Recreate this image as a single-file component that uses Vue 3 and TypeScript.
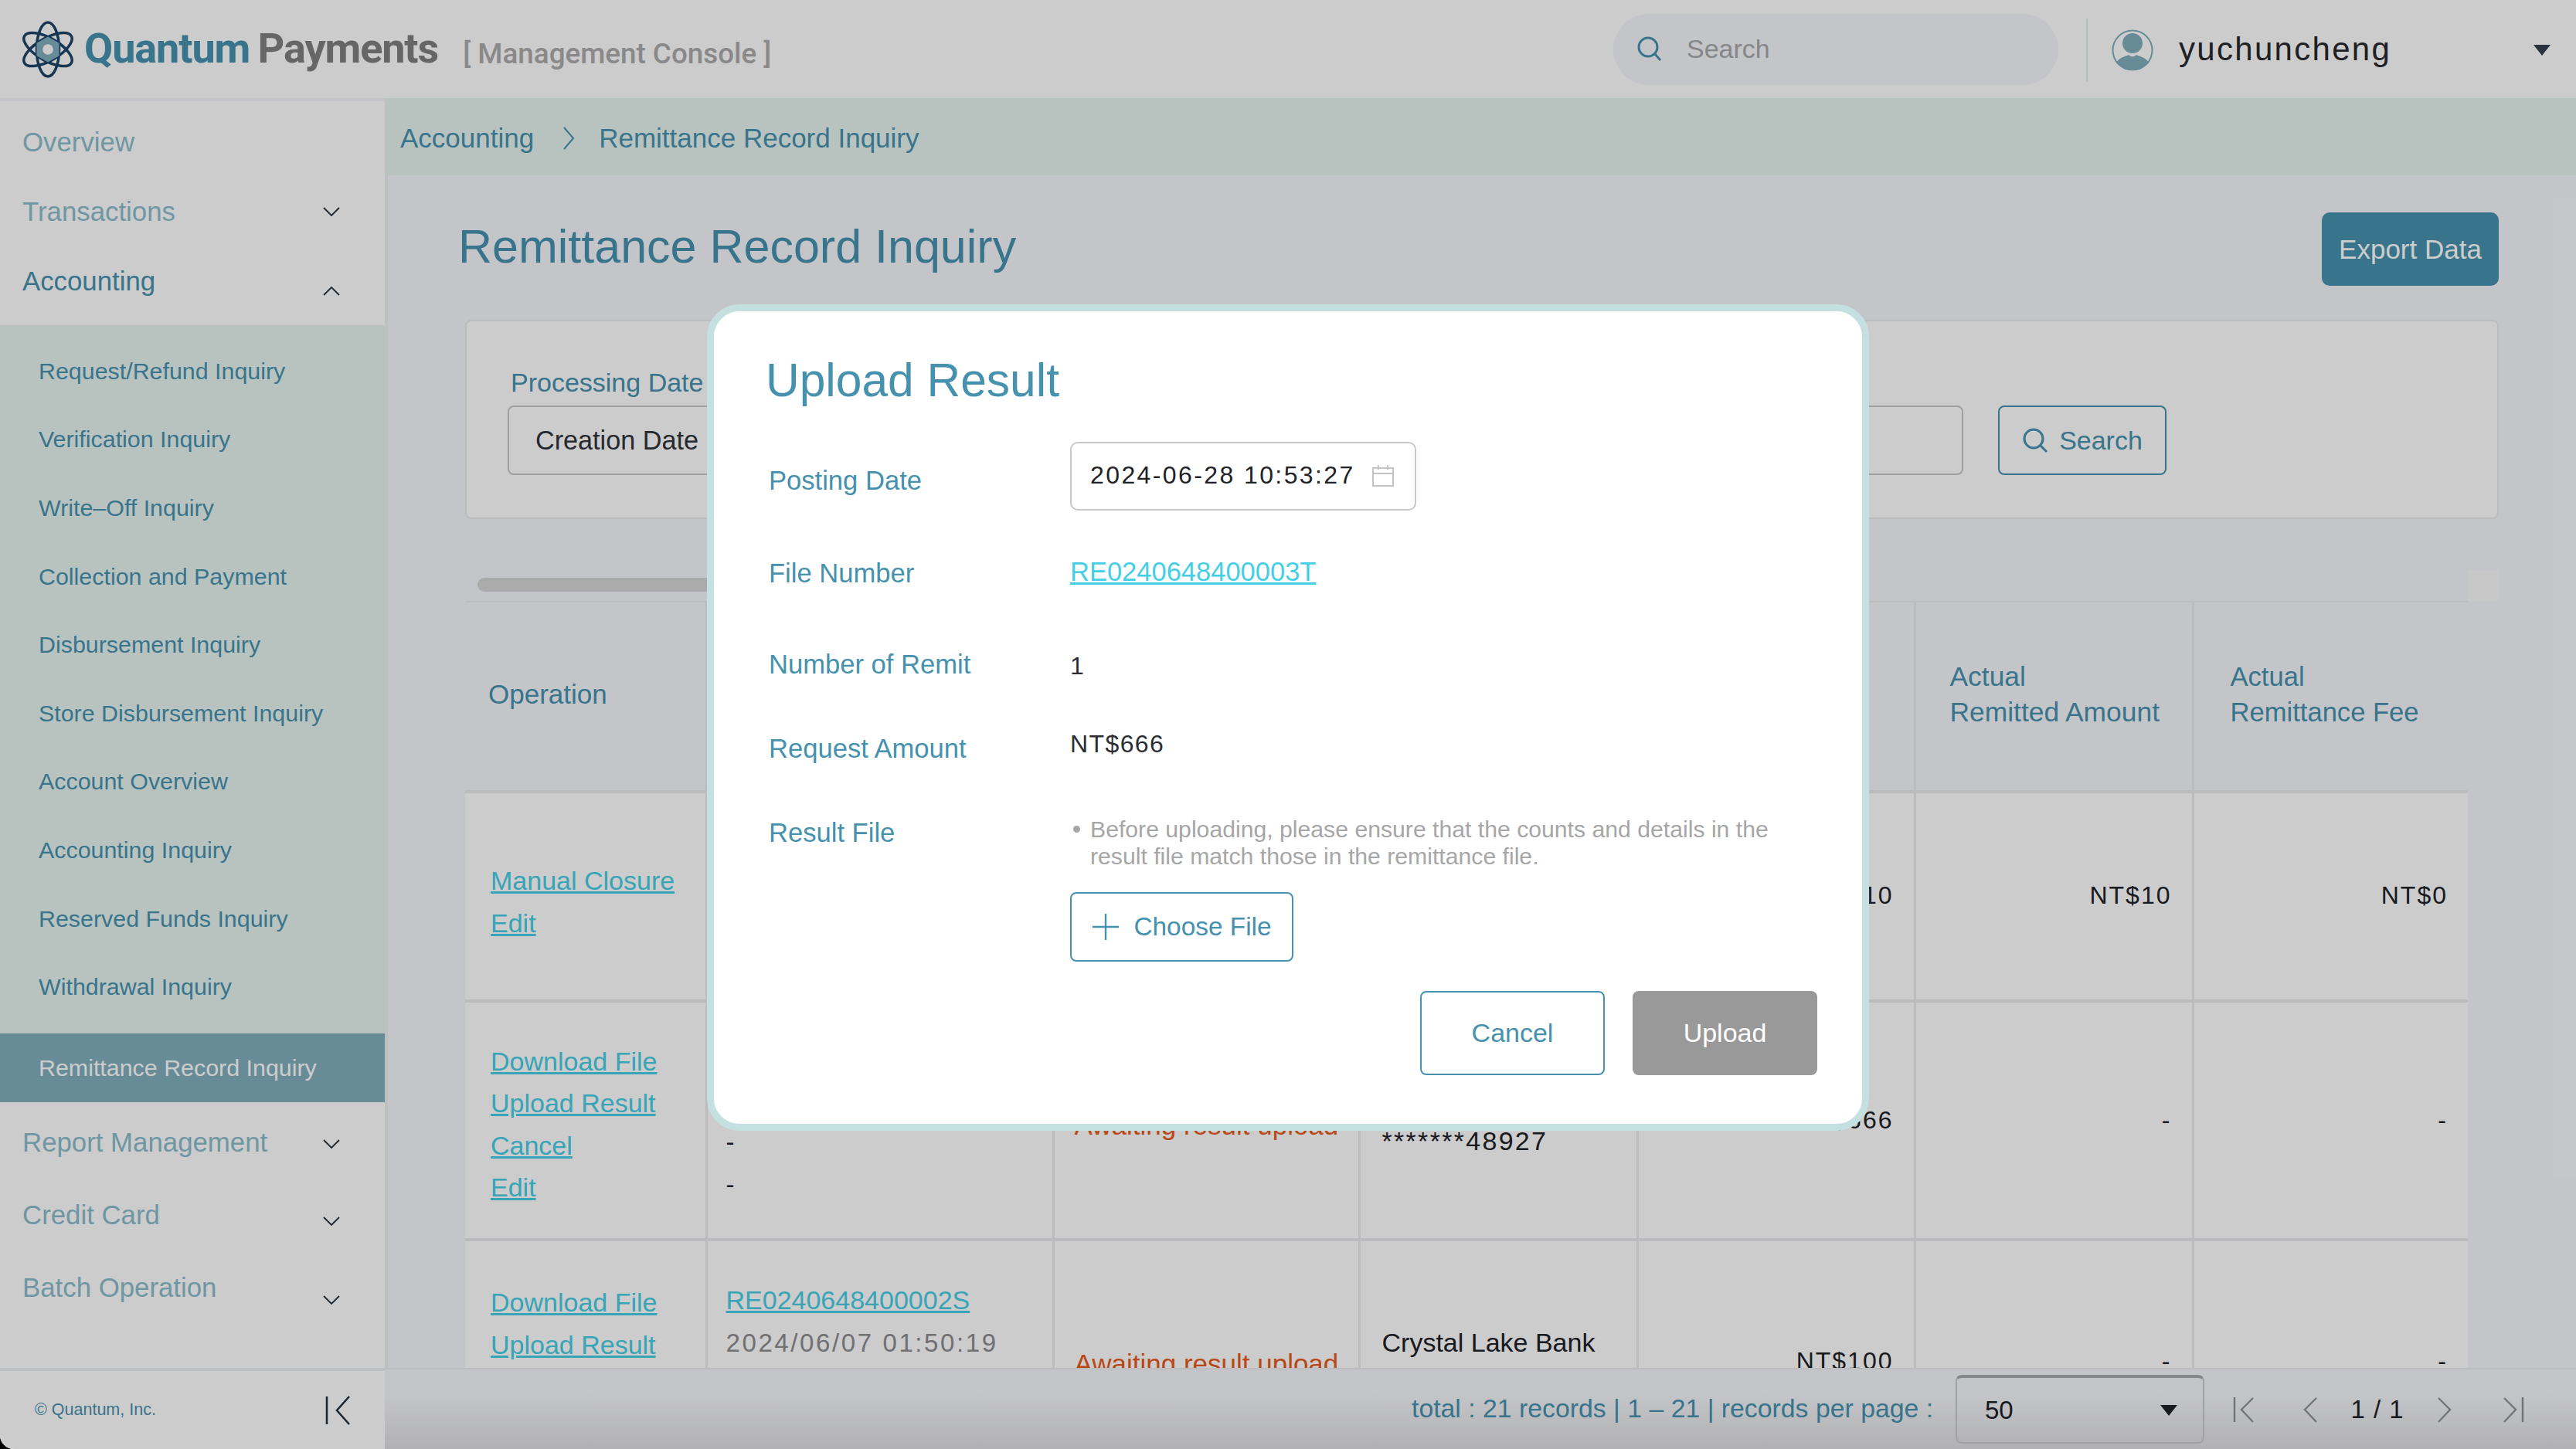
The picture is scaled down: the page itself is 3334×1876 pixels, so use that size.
<template>
  <div class="app">
    <header class="topbar">
      <div class="brand">
        <svg class="brand-logo" viewBox="0 0 72 76" fill="none">
          <g stroke="#1c4468" stroke-width="3.6">
            <ellipse cx="36" cy="38" rx="15" ry="36" />
            <ellipse cx="36" cy="38" rx="15" ry="36" transform="rotate(60 36 38)" />
            <ellipse cx="36" cy="38" rx="15" ry="36" transform="rotate(120 36 38)" />
          </g>
          <path d="M36 21 L51 29.5 V46.5 L36 55 L21 46.5 V29.5 Z" fill="#81b0bf" />
          <circle cx="36" cy="38" r="7" fill="#fff" />
        </svg>
        <span class="brand-name"><b>Quantum</b> <i>Payments</i></span>
        <span class="brand-sub">[ Management Console ]</span>
      </div>
      <div class="top-search">
        <svg class="top-search-icon" viewBox="0 0 34 34" fill="none" stroke="#4692ae" stroke-width="3">
          <circle cx="15" cy="15" r="12" />
          <path d="M24 24 L31 32" />
        </svg>
        <span>Search</span>
      </div>
      <div class="top-user">
        <svg class="avatar" viewBox="0 0 54 54">
          <circle cx="27" cy="27" r="25.5" fill="none" stroke="#81b0bf" stroke-width="2" />
          <circle cx="27" cy="18" r="13" fill="#81b0bf" />
          <path d="M6 43 C10 36 18 35 22 33 C25 36 29 36 32 33 C36 35 44 36 48 43 C43 49 35 53 27 53 C19 53 11 49 6 43 Z" fill="#81b0bf" />
        </svg>
        <span class="user-name">yuchuncheng</span>
        <span class="user-caret"></span>
      </div>
    </header>

    <div class="body">
      <aside class="sidebar">
        <nav class="nav">
          <div class="nav-top">
            <div v-for="item in topNav" :key="item.label" class="nav-row" :class="{ open: item.open }">
              <span>{{ item.label }}</span>
              <svg v-if="item.chevron" class="chev" :class="{ up: item.open }" :style="{ marginTop: item.shift + 'px' }" viewBox="0 0 24 14" fill="none" stroke="#26323c" stroke-width="1.8">
                <path d="M2 2 L12 12 L22 2" />
              </svg>
            </div>
          </div>
          <div class="sub-nav">
            <a v-for="item in subNav" :key="item" class="sub-row">{{ item }}</a>
          </div>
          <a class="sub-active">Remittance Record Inquiry</a>
          <div class="nav-bottom">
            <div v-for="item in bottomNav" :key="item.label" class="nav-row tall">
              <span>{{ item.label }}</span>
              <svg class="chev" :style="{ marginTop: item.shift + 'px' }" viewBox="0 0 24 14" fill="none" stroke="#26323c" stroke-width="1.8">
                <path d="M2 2 L12 12 L22 2" />
              </svg>
            </div>
          </div>
        </nav>
        <div class="side-foot">
          <span>© Quantum, Inc.</span>
          <svg class="collapse" viewBox="0 0 34 38" fill="none" stroke="#26323c" stroke-width="2.6">
            <path d="M2 1 V37" />
            <path d="M31 1 L15 19 L31 37" />
          </svg>
        </div>
      </aside>

      <main class="main">
        <div class="crumbs">
          <span>Accounting</span>
          <svg class="crumb-sep" viewBox="0 0 16 32" fill="none" stroke="#4692ae" stroke-width="2">
            <path d="M2 2 L14 16 L2 30" />
          </svg>
          <span>Remittance Record Inquiry</span>
        </div>

        <div class="content">
          <div class="page-head">
            <h1>Remittance Record Inquiry</h1>
            <button class="export-btn" type="button">Export Data</button>
          </div>

          <section class="filters">
            <label class="filter-label">Processing Date</label>
            <div class="filter-row">
              <div class="filter-input">
                <span class="filter-type">Creation Date</span>
              </div>
              <button class="filter-btn" type="button">
                <svg viewBox="0 0 34 34" fill="none" stroke="#4692ae" stroke-width="3">
                  <circle cx="15" cy="15" r="12" />
                  <path d="M24 24 L32 32" />
                </svg>
                Search
              </button>
            </div>
          </section>

          <div class="scroller">
            <div class="scroll-track"><div class="scroll-thumb"></div></div>
            <div class="scroll-corner"></div>
          </div>

          <div class="table-wrap">
            <table class="grid">
              <colgroup>
                <col v-for="w in colWidths" :key="w.id" :style="{ width: w.px + 'px' }" />
              </colgroup>
              <thead>
                <tr>
                  <th>Operation</th>
                  <th>File Number</th>
                  <th>Status</th>
                  <th>Bank</th>
                  <th>Request<br />Amount</th>
                  <th>Actual<br />Remitted Amount</th>
                  <th>Actual<br />Remittance Fee</th>
                </tr>
              </thead>
              <tbody>
                <tr v-for="row in rows" :key="row.file" :class="row.cls">
                  <td class="ops">
                    <a v-for="op in row.ops" :key="op">{{ op }}</a>
                  </td>
                  <td class="file">
                    <a>{{ row.file }}</a>
                    <span class="stamp">{{ row.date }}</span>
                    <span>-</span>
                    <span>-</span>
                  </td>
                  <td class="status">{{ row.status }}</td>
                  <td class="bank">
                    <span>{{ row.bank }}</span>
                    <span class="account">{{ row.account }}</span>
                  </td>
                  <td class="num">{{ row.amount }}</td>
                  <td class="num">{{ row.remitted }}</td>
                  <td class="num">{{ row.fee }}</td>
                </tr>
              </tbody>
            </table>
          </div>
        </div>

        <footer class="pager">
          <span class="pager-info">total : 21 records | 1 – 21 | records per page :</span>
          <div class="pager-select">
            <span>50</span>
            <span class="pager-caret"></span>
          </div>
          <div class="pager-nav">
            <svg class="pg first" viewBox="0 0 28 34" fill="none" stroke="#8a9098" stroke-width="2.4">
              <path d="M2 1 V33" />
              <path d="M26 2 L11 17 L26 33" stroke="#8f9398" />
            </svg>
            <svg class="pg prev" viewBox="0 0 20 34" fill="none" stroke="#8f9398" stroke-width="2.4">
              <path d="M18 2 L3 17 L18 33" />
            </svg>
            <span class="pg-text">1 / 1</span>
            <svg class="pg next" viewBox="0 0 20 34" fill="none" stroke="#8f9398" stroke-width="2.4">
              <path d="M2 2 L17 17 L2 33" />
            </svg>
            <svg class="pg last" viewBox="0 0 28 34" fill="none" stroke="#8a9098" stroke-width="2.4">
              <path d="M26 1 V33" />
              <path d="M2 2 L17 17 L2 33" stroke="#8f9398" />
            </svg>
          </div>
        </footer>
      </main>
    </div>

    <div class="mask">
      <div class="modal">
        <h2>Upload Result</h2>
        <div class="field date-field">
          <label>Posting Date</label>
          <div class="date-box">
            <span>2024-06-28 10:53:27</span>
            <svg viewBox="0 0 30 28" fill="none" stroke="#c4c4c4" stroke-width="2">
              <rect x="2" y="4" width="26" height="23" />
              <path d="M2 11 H28 M9 0 V6 M21 0 V6" />
            </svg>
          </div>
        </div>
        <div class="field file-field">
          <label>File Number</label>
          <a class="file-link">RE0240648400003T</a>
        </div>
        <div class="field count-field">
          <label>Number of Remit</label>
          <span class="value">1</span>
        </div>
        <div class="field amount-field">
          <label>Request Amount</label>
          <span class="value">NT$666</span>
        </div>
        <div class="field result-field">
          <label>Result File</label>
          <div class="result-body">
            <ul class="hint">
              <li>Before uploading, please ensure that the counts and details in the result file match those in the remittance file.</li>
            </ul>
            <button class="choose-btn" type="button">
              <svg viewBox="0 0 36 36" fill="none" stroke="#4692ae" stroke-width="2.4">
                <path d="M18 1 V35 M1 18 H35" />
              </svg>
              Choose File
            </button>
          </div>
        </div>
        <div class="modal-actions">
          <button class="btn-cancel" type="button">Cancel</button>
          <button class="btn-upload" type="button">Upload</button>
        </div>
      </div>
    </div>
  </div>
</template>

<script setup lang="ts">
const topNav = [
  { label: 'Overview', chevron: false, open: false, shift: 0 },
  { label: 'Transactions', chevron: true, open: false, shift: 0 },
  { label: 'Accounting', chevron: true, open: true, shift: 26 },
]

const subNav = [
  'Request/Refund Inquiry',
  'Verification Inquiry',
  'Write–Off Inquiry',
  'Collection and Payment',
  'Disbursement Inquiry',
  'Store Disbursement Inquiry',
  'Account Overview',
  'Accounting Inquiry',
  'Reserved Funds Inquiry',
  'Withdrawal Inquiry',
]

const bottomNav = [
  { label: 'Report Management', shift: 4 },
  { label: 'Credit Card', shift: 16 },
  { label: 'Batch Operation', shift: 32 },
]

const colWidths = [
  { id: 'op', px: 312 },
  { id: 'file', px: 449 },
  { id: 'status', px: 396 },
  { id: 'bank', px: 360 },
  { id: 'req', px: 359 },
  { id: 'rem', px: 360 },
  { id: 'fee', px: 356 },
]

const rows = [
  {
    cls: 'row-a',
    ops: ['Manual Closure', 'Edit'],
    file: 'RE0240648400004U',
    date: '2024/06/12 11:20:41',
    status: 'Closed',
    bank: 'Crystal Lake Bank',
    account: '*******10382',
    amount: 'NT$10',
    remitted: 'NT$10',
    fee: 'NT$0',
  },
  {
    cls: 'row-b',
    ops: ['Download File', 'Upload Result', 'Cancel', 'Edit'],
    file: 'RE0240648400003T',
    date: '2024/06/28 10:53:27',
    status: 'Awaiting result upload',
    bank: 'Crystal Lake Bank',
    account: '*******48927',
    amount: 'NT$666',
    remitted: '-',
    fee: '-',
  },
  {
    cls: 'row-c',
    ops: ['Download File', 'Upload Result', 'Cancel', 'Edit'],
    file: 'RE0240648400002S',
    date: '2024/06/07 01:50:19',
    status: 'Awaiting result upload',
    bank: 'Crystal Lake Bank',
    account: '*******48927',
    amount: 'NT$100',
    remitted: '-',
    fee: '-',
  },
]
</script>

<style>
html,
body {
  margin: 0;
  background: #000;
}
</style>

<style scoped>
.app {
  --primary: #4692ae;
  --soft: #8bbdcc;
  --line: #ebebee;
  position: relative;
  width: 3334px;
  height: 1876px;
  display: flex;
  flex-direction: column;
  overflow: hidden;
  border-bottom-left-radius: 18px;
  background: #f6f7fc;
  color: #1d2228;
  font-family: "Liberation Sans", Arial, sans-serif;
  font-size: 33px;
}

button {
  font: inherit;
  cursor: pointer;
}

/* top bar */
.topbar {
  flex: none;
  height: 127px;
  box-sizing: border-box;
  padding: 18px 0 17px 27px;
  display: flex;
  align-items: stretch;
  background: #fff;
}

.brand {
  display: flex;
  align-items: center;
  width: 2061px;
}

.brand-logo {
  width: 70px;
  height: 74px;
  flex: none;
}

.brand-name {
  margin: -3px 0 0 12px;
  font-family: Roboto, "Liberation Sans", sans-serif;
  font-size: 54px;
  font-weight: 700;
  letter-spacing: -1.1px;
  word-spacing: -2px;
  white-space: nowrap;
}

.brand-name b {
  font-weight: 700;
  color: #4692ae;
}

.brand-name i {
  font-style: normal;
  color: #808080;
}

.brand-sub {
  margin: 10px 0 0 32px;
  font-family: Roboto, "Liberation Sans", sans-serif;
  font-size: 36.8px;
  font-weight: 500;
  color: #acacac;
  white-space: nowrap;
}

.top-search {
  width: 576px;
  border-radius: 46px;
  box-sizing: border-box;
  padding: 0 0 2px 30px;
  display: flex;
  align-items: center;
  gap: 31px;
  background: #f6f7fc;
  color: #a8a8ac;
  font-size: 34px;
}

.top-search-icon {
  width: 34px;
  height: 34px;
}

.top-user {
  flex: 1;
  margin: 6px 0 4px 36px;
  padding-left: 31px;
  border-left: 2px solid #e4eeec;
  display: flex;
  align-items: center;
}

.avatar {
  width: 54px;
  height: 54px;
  flex: none;
}

.user-name {
  margin: -3px 0 0 33px;
  font-size: 42px;
  letter-spacing: 2.3px;
  color: #26292e;
}

.user-caret {
  margin-left: auto;
  margin-right: 33px;
  width: 0;
  height: 0;
  border-left: 11px solid transparent;
  border-right: 11px solid transparent;
  border-top: 14px solid #34404f;
}

/* sidebar */
.body {
  flex: 1;
  min-height: 0;
  display: flex;
}

.sidebar {
  flex: none;
  width: 498px;
  margin-top: 4px;
  display: flex;
  flex-direction: column;
  background: #fff;
  border-right: 4px solid #ecf0f2;
}

.nav {
  flex: 1;
  min-height: 0;
  overflow: hidden;
}

.nav-top {
  padding-top: 8px;
}

.nav-row {
  height: 90px;
  box-sizing: border-box;
  padding: 0 57px 0 29px;
  display: flex;
  align-items: center;
  justify-content: space-between;
  color: var(--soft);
  font-size: 34.8px;
}

.nav-row.open {
  color: var(--primary);
}

.nav-row.tall {
  height: 94px;
}

.chev {
  width: 24px;
  height: 14px;
  flex: none;
}

.chev.up {
  transform: rotate(180deg);
}

.sub-nav {
  margin-top: 12px;
  padding: 15px 0 16px;
  background: #e7f4f1;
}

.sub-row {
  height: 88.6px;
  padding-left: 50px;
  display: flex;
  align-items: center;
  color: var(--primary);
  font-size: 30.4px;
}

.sub-active {
  height: 89px;
  padding-left: 50px;
  display: flex;
  align-items: center;
  background: #81b0bf;
  color: #fff;
  font-size: 30.4px;
}

.nav-bottom {
  padding-top: 5px;
}

.side-foot {
  flex: none;
  height: 105px;
  box-sizing: border-box;
  border-top: 4px solid #ecf0f2;
  padding: 0 43px 0 45px;
  display: flex;
  align-items: center;
  justify-content: space-between;
  font-size: 21.5px;
  color: var(--primary);
}

.collapse {
  width: 34px;
  height: 38px;
}

/* main */
.main {
  flex: 1;
  min-width: 0;
  display: flex;
  flex-direction: column;
  margin-left: -4px;
}

.crumbs {
  flex: none;
  height: 100px;
  box-sizing: border-box;
  padding: 4px 0 0 20px;
  display: flex;
  align-items: center;
  gap: 37px;
  background: #e7f4f1;
  color: var(--primary);
  font-size: 35px;
}

.crumb-sep {
  width: 16px;
  height: 32px;
  margin-right: -6px;
}

.content {
  flex: 1;
  min-height: 0;
  overflow: hidden;
  padding: 48px 100px 0 104px;
}

.page-head {
  height: 95px;
  display: flex;
  align-items: center;
  justify-content: space-between;
}

.page-head h1 {
  margin: -7px 0 0 -9px;
  font-size: 61px;
  font-weight: 400;
  color: var(--primary);
}

.export-btn {
  width: 229px;
  height: 95px;
  border: 0;
  border-radius: 10px;
  background: var(--primary);
  color: #fff;
  font-size: 35px;
}

.filters {
  margin-top: 44px;
  height: 258px;
  box-sizing: border-box;
  border: 2px solid var(--line);
  border-radius: 8px;
  padding: 58px 28px 0 53px;
  background: #fff;
}

.filter-label {
  display: block;
  height: 51px;
  padding-left: 4px;
  color: var(--primary);
  font-size: 34px;
  line-height: 42px;
}

.filter-row {
  display: flex;
  gap: 45px;
}

.filter-input {
  width: 1884px;
  height: 90px;
  box-sizing: border-box;
  border: 2px solid #c8c8cc;
  border-radius: 8px;
  display: flex;
  align-items: center;
}

.filter-type {
  padding-left: 34px;
  color: #30343a;
  font-size: 34.2px;
}

.filter-btn {
  width: 218px;
  height: 90px;
  border: 2px solid var(--primary);
  border-radius: 8px;
  background: transparent;
  color: var(--primary);
  font-size: 34px;
  display: flex;
  align-items: center;
  justify-content: center;
  gap: 14px;
}

.filter-btn svg {
  width: 34px;
  height: 34px;
}

.scroller {
  height: 106px;
  display: flex;
  align-items: flex-end;
  justify-content: space-between;
}

.scroll-track {
  flex: 1;
  height: 30px;
  padding-left: 16px;
}

.scroll-thumb {
  width: 1400px;
  height: 18px;
  border-radius: 9px;
  background: #d6d6d8;
}

.scroll-corner {
  width: 40px;
  height: 40px;
  background: #fbfbfb;
}

.table-wrap {
  width: 2592px;
  height: 993px;
  overflow: hidden;
}

.grid {
  width: 2592px;
  table-layout: fixed;
  border-collapse: collapse;
}

.grid th {
  height: 246px;
  box-sizing: border-box;
  border: 2px solid var(--line);
  border-left: 0;
  border-right-width: 3px;
  padding: 0 0 6px 30px;
  text-align: left;
  font-weight: 400;
  font-size: 35px;
  line-height: 46px;
  color: var(--primary);
}

.grid th:last-child {
  border-right: 0;
  padding-left: 47px;
  font-size: 34.6px;
}

.grid th:nth-child(6) {
  padding-left: 44px;
  font-size: 35.4px;
}

.grid td {
  border-top: 4px solid var(--line);
  border-right: 3px solid var(--line);
  background: #fff;
  box-sizing: border-box;
  vertical-align: middle;
  padding: 0 26px;
}

.grid td:last-child {
  border-right: 0;
}

.row-a td {
  height: 271px;
}

.row-b td {
  height: 309px;
}

.row-c td {
  height: 320px;
}

.ops a {
  display: block;
  margin-left: 7px;
  line-height: 54.5px;
  color: #46cee6;
  font-size: 34px;
  text-decoration: underline;
  white-space: nowrap;
}

.grid .row-a .ops {
  padding-top: 14px;
}

.grid .row-b .ops {
  padding-top: 10px;
}

.grid .row-c .ops {
  padding-top: 4px;
}

.file a,
.file span {
  display: block;
  line-height: 55px;
  font-size: 33px;
}

.file a {
  color: #46cee6;
  font-size: 34px;
  text-decoration: underline;
}

.grid .file {
  padding-left: 24px;
}

.file .stamp {
  color: #8c8c90;
  letter-spacing: 2.6px;
  white-space: nowrap;
}

.status {
  color: #e85a20;
  font-size: 35px;
  white-space: nowrap;
}

.grid .row-b .status {
  padding-top: 12px;
}

.grid .bank {
  padding-left: 28px;
  padding-bottom: 2px;
}

.bank span {
  display: block;
  line-height: 54px;
  font-size: 34px;
  white-space: nowrap;
}

.bank .account {
  letter-spacing: 2.3px;
}

.num {
  text-align: right;
  font-size: 32px;
  letter-spacing: 2px;
}

.grid td.num {
  padding-right: 26px;
}

.grid .row-a td.num {
  padding-bottom: 3px;
}

.grid .row-c td.num {
  padding-bottom: 8px;
}

/* pager */
.pager {
  flex: none;
  height: 105px;
  box-sizing: border-box;
  border-top: 2px solid var(--line);
  padding: 6px 0 6px 1329px;
  display: flex;
  align-items: center;
  background: linear-gradient(#f6f7fc 30%, #dedee0);
}

.pager-info {
  width: 704px;
  margin-top: -3px;
  color: var(--primary);
  font-size: 33.8px;
  white-space: nowrap;
}

.pager-select {
  width: 322px;
  height: 89px;
  box-sizing: border-box;
  border: 2px solid #c8cace;
  border-top: 4px solid #a8abb0;
  border-radius: 8px;
  padding: 0 33px 0 36px;
  display: flex;
  align-items: center;
  justify-content: space-between;
  font-size: 33px;
}

.pager-caret {
  width: 0;
  height: 0;
  border-left: 11px solid transparent;
  border-right: 11px solid transparent;
  border-top: 14px solid #1d2228;
}

.pager-nav {
  display: flex;
  align-items: center;
  margin-left: 37px;
}

.pg {
  height: 34px;
  flex: none;
}

.pg.first,
.pg.last {
  width: 28px;
}

.pg.prev,
.pg.next {
  width: 20px;
}

.pg.prev {
  margin-left: 62px;
}

.pg-text {
  width: 154px;
  text-align: center;
  font-size: 33px;
  letter-spacing: 1px;
  white-space: nowrap;
}

.pg.last {
  margin-left: 65px;
}

/* modal */
.mask {
  position: absolute;
  inset: 0;
  display: flex;
  justify-content: center;
  align-items: flex-start;
  box-sizing: border-box;
  padding-top: 394px;
  background: rgba(0, 0, 0, 0.2);
}

.modal {
  width: 1504px;
  height: 1070px;
  box-sizing: border-box;
  border: 9px solid #c5e0e0;
  border-radius: 42px;
  padding: 50px 58px 0 72px;
  background: #fff;
}

.modal h2 {
  margin: 0 0 0 -5px;
  height: 78px;
  font-size: 60.5px;
  line-height: 78px;
  font-weight: 400;
  color: var(--primary);
}

.field {
  display: flex;
  font-size: 34.6px;
}

.field label {
  width: 390px;
  flex: none;
  margin-left: -1px;
  color: var(--primary);
  line-height: 42px;
}

.date-field {
  margin-top: 41px;
}

.date-field label {
  margin-top: 29px;
}

.date-box {
  width: 448px;
  height: 89px;
  box-sizing: border-box;
  border: 2px solid #c8c8c8;
  border-radius: 10px;
  padding: 0 26px 2px 24px;
  display: flex;
  align-items: center;
  justify-content: space-between;
  font-size: 32px;
  letter-spacing: 2.4px;
  color: #1f2328;
}

.date-box svg {
  width: 30px;
  height: 28px;
  flex: none;
}

.file-field {
  margin-top: 60px;
}

.file-link {
  margin-top: -2px;
  color: #46cee6;
  font-size: 34.5px;
  line-height: 42px;
  text-decoration: underline;
}

.count-field {
  margin-top: 76px;
}

.amount-field {
  margin-top: 65px;
}

.result-field {
  margin-top: 67px;
}

.value {
  font-size: 32px;
  letter-spacing: 1.4px;
  line-height: 42px;
  color: #2a2e33;
}

.count-field .value {
  margin-top: 2px;
}

.amount-field .value {
  margin-top: -6px;
}

.result-body {
  width: 920px;
}

.hint {
  margin: -1px 0 0;
  padding: 0 0 0 26px;
  font-size: 30.2px;
  line-height: 35px;
  color: #a6a6a6;
  list-style: none;
  position: relative;
}

.hint li::before {
  content: "";
  position: absolute;
  left: 4px;
  top: 13px;
  width: 9px;
  height: 9px;
  border-radius: 50%;
  background: #a6a6a6;
}

.choose-btn {
  margin-top: 29px;
  width: 289px;
  height: 90px;
  border: 2px solid var(--primary);
  border-radius: 8px;
  background: #fff;
  color: var(--primary);
  font-size: 33.4px;
  display: flex;
  align-items: center;
  justify-content: center;
  gap: 18px;
  padding: 0;
}

.choose-btn svg {
  width: 36px;
  height: 36px;
}

.modal-actions {
  margin-top: 38px;
  display: flex;
  justify-content: flex-end;
  gap: 36px;
}

.btn-cancel,
.btn-upload {
  width: 239px;
  height: 109px;
  border-radius: 8px;
  font-size: 34px;
}

.btn-cancel {
  border: 2px solid var(--primary);
  background: #fff;
  color: var(--primary);
}

.btn-upload {
  border: 0;
  background: #999;
  color: #fff;
}
</style>
